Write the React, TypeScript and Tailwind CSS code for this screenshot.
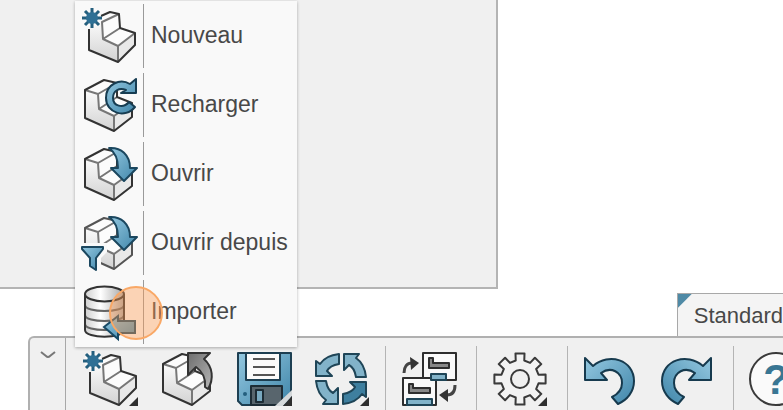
import type { ReactNode } from "react"

type IconProps = { children: ReactNode }

function Icon({ children }: IconProps) {
  return (
    <svg
      viewBox="0 0 54 54"
      className="block size-[54px] shrink-0 overflow-visible"
      fill="none"
      strokeLinejoin="round"
      aria-hidden="true"
    >
      {children}
    </svg>
  )
}

// Shared gradients, referenced by id from every icon
function Gradients() {
  return (
    <svg width="0" height="0" className="absolute" aria-hidden="true">
      <defs>
        <linearGradient id="blue" x1="0" y1="0" x2="1" y2="1">
          <stop offset="0" stopColor="#94c8e0" />
          <stop offset="1" stopColor="#3f85a9" />
        </linearGradient>
        <linearGradient id="front" x1="0" y1="0" x2="0" y2="1">
          <stop offset="0" stopColor="#fbfbfb" />
          <stop offset="1" stopColor="#d2d2d2" />
        </linearGradient>
        <linearGradient id="metal" x1="0" y1="0" x2="1" y2="0">
          <stop offset="0" stopColor="#cfcfcf" />
          <stop offset="0.4" stopColor="#ffffff" />
          <stop offset="1" stopColor="#a5a5a5" />
        </linearGradient>
        <linearGradient id="gray" x1="0" y1="0" x2="1" y2="1">
          <stop offset="0" stopColor="#6e6e6e" />
          <stop offset="1" stopColor="#b5b5b5" />
        </linearGradient>
      </defs>
    </svg>
  )
}

function Part({ outline = "#333333" }: { outline?: string }) {
  return (
    <>
      <path d="M2 12 21 2 34 5V19L49 25V39L31 53 2 40Z" fill="#fcfcfc" />
      <path d="M2 12 15 16 16 31 31 38V53L2 40Z" fill="url(#front)" />
      <path d="M31 38 49 25V39L31 53Z" fill="#e9e9e9" />
      <path d="M2 12 15 16 34 5M15 16 16 31 31 38V53M16 31 34 19M31 38 49 25" stroke="#777777" strokeWidth="2" />
      <path d="M2 12 21 2 34 5V19L49 25V39L31 53 2 40Z" stroke={outline} strokeWidth="2" />
    </>
  )
}

function Corner() {
  return <path d="M54 45V54H45Z" fill="#2e2e2e" />
}

function NewIcon({ corner = false }: { corner?: boolean }) {
  return (
    <Icon>
      <path d="M6 14 19 7 27 3 36 5 37 19 52 24V36L35 53 6 41Z" fill="#fcfcfc" />
      <path d="M6 14 19 12 20 30 35 37V53L6 41Z" fill="url(#front)" />
      <path d="M35 37 52 24V36L35 53Z" fill="#e9e9e9" />
      <path d="M36 5 19 13 20 30 35 37V53M20 30 37 19M35 37 52 24" stroke="#777777" strokeWidth="2" />
      <path d="M6 20V41L35 53 52 36V24L37 19 36 5 27 3 18 7" stroke="#333333" strokeWidth="2" />
      <circle cx="9" cy="9" r="9" fill="#fafafa" />
      <path d="M9-1V19M-1 9H19M2 2 16 16M16 2 2 16" stroke="#245f7e" strokeWidth="3" />
      <circle cx="9" cy="9" r="6" fill="#2f7095" />
      {corner && <Corner />}
    </Icon>
  )
}

function ReloadIcon() {
  return (
    <Icon>
      <Part />
      <path
        d="M53 1V15H38L43 12C36 9 30 13 30 20C30 28 40 31 46 24L52 29C42 41 23 35 23 20C23 6 37 0 47 6Z"
        fill="url(#blue)"
        stroke="#173d52"
        strokeWidth="2"
      />
    </Icon>
  )
}

function OpenIcon() {
  return (
    <Icon>
      <Part />
      <path
        d="M26 1C38 0 47 8 47 21H54L41 34 28 21H35C35 12 33 6 26 1Z"
        fill="url(#blue)"
        stroke="#1b475f"
        strokeWidth="2"
      />
    </Icon>
  )
}

function OpenFromIcon() {
  return (
    <Icon>
      <Part outline="#555555" />
      <path d="M-2 27H24V36L18 42V56H-2Z" fill="#f9f9f9" />
      <path
        d="M26 1C38 0 47 8 47 21H54L41 34 28 21H35C35 12 33 6 26 1Z"
        fill="url(#blue)"
        stroke="#1b475f"
        strokeWidth="2"
      />
      <path d="M-1 31H20V33L13 42V54L7 50V42L-1 33Z" fill="url(#blue)" stroke="#1b475f" strokeWidth="2" />
    </Icon>
  )
}

function ImportIcon() {
  return (
    <Icon>
      <path d="M2 9V45C2 54 41 54 41 45V9Z" fill="url(#metal)" />
      <path d="M2 20C2 28 41 28 41 20M2 30C2 38 41 38 41 30M2 39C2 47 41 47 41 39" stroke="#666666" strokeWidth="2" />
      <path d="M2 9V45C2 54 41 54 41 45V9" stroke="#333333" strokeWidth="2" />
      <ellipse cx="21.5" cy="9" rx="19.5" ry="7.5" fill="url(#metal)" stroke="#333333" strokeWidth="2" />
      <path d="M21 42 35 31V36H52V48H35V54Z" fill="url(#blue)" stroke="#174a66" strokeWidth="2" strokeLinejoin="miter" />
    </Icon>
  )
}

function ReopenIcon() {
  return (
    <Icon>
      <Part />
      <path
        d="M27 1H49L43 7C52 15 53 27 47 37L44 35C45 26 42 20 35 15L27 23Z"
        fill="url(#gray)"
        stroke="#333333"
        strokeWidth="2"
      />
    </Icon>
  )
}

function SaveIcon() {
  return (
    <Icon>
      <path d="M0 1H53V53H4L0 49Z" fill="url(#blue)" stroke="#1d3f52" strokeWidth="2" />
      <path d="M8 1H42V28H8Z" fill="#fbfbfb" stroke="#1d3f52" strokeWidth="2" />
      <path d="M15 7H37M15 15H37M15 23H37" stroke="#555555" strokeWidth="2" />
      <path d="M13 34H44V53H13Z" fill="#58656d" stroke="#1d2c35" strokeWidth="2" />
      <path d="M18 38H25V50H18Z" fill="#79a9c0" stroke="#1d2c35" strokeWidth="2" />
      <circle cx="7" cy="42" r="2" fill="#245f7e" />
      <path d="M54 38V44L45 54H37Z" fill="#d5d9db" />
      <path d="M54 44V54H45Z" fill="#2e2e2e" />
    </Icon>
  )
}

function RebuildIcon() {
  const arrow = "M24 2V12C18 13 14 15 12 19L17 24H1V9L5 12C9 6 15 3 24 2Z"
  return (
    <Icon>
      {[0, 90, 180, 270].map((angle) => (
        <path
          key={angle}
          d={arrow}
          transform={`rotate(${angle} 26 27)`}
          fill={angle === 180 ? "#3e7f9f" : "#82b3c9"}
          stroke="#1f4557"
          strokeWidth="2"
        />
      ))}
      <Corner />
    </Icon>
  )
}

function CompareIcon() {
  return (
    <Icon>
      <path d="M21 1H54V28H21Z" fill="#fafafa" stroke="#2e2e2e" strokeWidth="2" />
      <path d="M27 6H31V11H47V16H27Z" fill="#888888" stroke="#2e2e2e" strokeWidth="2" />
      <path d="M1 26H34V53H1Z" fill="#fafafa" stroke="#2e2e2e" strokeWidth="2" />
      <path d="M29 22H44V28H29Z" fill="#82b3c9" stroke="#1f4557" strokeWidth="2" />
      <path d="M5 47H30V53H5Z" fill="#82b3c9" stroke="#1f4557" strokeWidth="2" />
      <path d="M7 32H11V36H28V41H7Z" fill="#888888" stroke="#2e2e2e" strokeWidth="2" />
      <path d="M2 21C2 15 5 11 10 11" stroke="#444444" strokeWidth="3" />
      <path d="M8 5 17 11 9 18Z" fill="#333333" />
      <path d="M53 33C53 40 50 43 45 43" stroke="#444444" strokeWidth="3" />
      <path d="M46 37 37 43 46 50Z" fill="#333333" />
    </Icon>
  )
}

function GearIcon() {
  const points: string[] = []
  for (let tooth = 0; tooth < 8; tooth++) {
    for (const [offset, radius] of [[-13, 19], [-10, 26], [10, 26], [13, 19]]) {
      const angle = ((tooth * 45 + offset) * Math.PI) / 180
      points.push(`${27 + radius * Math.cos(angle)},${27 + radius * Math.sin(angle)}`)
    }
  }
  return (
    <Icon>
      <polygon points={points.join(" ")} fill="#f3f3f3" stroke="#3a3a3a" strokeWidth="2" />
      <circle cx="27" cy="27" r="9" fill="#f0f0f0" stroke="#3a3a3a" strokeWidth="2" />
      <Corner />
    </Icon>
  )
}

function UndoIcon({ flip = false }: { flip?: boolean }) {
  return (
    <Icon>
      <path
        transform={flip ? "translate(51 0) scale(-1 1)" : undefined}
        d="M1 6V28H23L17 21C27 14 38 20 38 31C38 37 34 42 28 45L34 52C43 48 50 40 50 29C50 8 25 0 9 14Z"
        fill="url(#blue)"
        stroke="#163a4e"
        strokeWidth="2"
      />
    </Icon>
  )
}

const menuItems = [
  { label: "Nouveau", icon: <NewIcon /> },
  { label: "Recharger", icon: <ReloadIcon /> },
  { label: "Ouvrir", icon: <OpenIcon /> },
  { label: "Ouvrir depuis", icon: <OpenFromIcon /> },
  { label: "Importer", icon: <ImportIcon /> },
]

function FileMenu() {
  return (
    <div
      role="menu"
      className="absolute bottom-full -left-[9px] z-10 mb-[5px] bg-[#f9f9f9] pb-px shadow-[0_1px_3px_rgba(0,0,0,0.3)]"
    >
      {menuItems.map((item) => (
        <button
          key={item.label}
          type="button"
          role="menuitem"
          className="flex h-[69px] w-full items-center pr-[9px] pl-2 text-left"
        >
          {item.icon}
          <span className="ml-[6px] flex h-16 items-center border-l border-[#9a9a9a] pl-[7px] whitespace-nowrap">
            {item.label}
          </span>
        </button>
      ))}
      {/* Click marker */}
      <span className="pointer-events-none absolute bottom-[7px] left-[34px] size-[54px] rounded-full border-2 border-[#f9a866] bg-[#ff9a50]/40" />
    </div>
  )
}

function ToolButton({ label, children }: { label: string; children: ReactNode }) {
  return (
    <button type="button" aria-label={label} className="shrink-0">
      {children}
    </button>
  )
}

function Separator() {
  return <div className="mt-2 w-px shrink-0 self-stretch bg-[#b4b4b4]" />
}

export default function App() {
  return (
    <div className="flex h-screen flex-col overflow-hidden bg-white font-['Liberation_Sans',Arial,sans-serif] text-[23px] text-[#484848]">
      <Gradients />
      <main className="w-[63.6%] flex-1 border-r-2 border-b-2 border-[#b4b4b4] bg-[#f0f0f0]" />

      <div className="mt-1 flex">
        <button
          type="button"
          className="relative ml-auto h-[43px] overflow-hidden border-t border-l border-[#a8a8a8] bg-[#f4f4f4] pl-4 text-[22px] whitespace-nowrap"
        >
          <span className="absolute top-0 left-0 size-[14px] bg-[#4f8aa6] [clip-path:polygon(0_0,100%_0,0_100%)]" />
          Standard
        </button>
      </div>

      <div
        role="toolbar"
        className="ml-7 flex h-[74px] shrink-0 items-start rounded-tl-md border-t-2 border-l-2 border-[#b0b0b0] bg-[#f0f0f0]"
      >
        <button
          type="button"
          aria-label="Options"
          className="flex w-9 shrink-0 justify-center self-stretch border-r border-[#a8a8a8] pt-[13px]"
        >
          <svg viewBox="0 0 16 8" className="h-2 w-4" fill="none" stroke="#777777" strokeWidth="2" aria-hidden="true">
            <path d="M1 1 6 5Q8 7 10 5L15 1" />
          </svg>
        </button>

        <div className="flex shrink-0 gap-[23px] pt-[14px] pr-4 pl-[18px]">
          <div className="relative flex">
            <ToolButton label="Nouveau">
              <NewIcon corner />
            </ToolButton>
            <FileMenu />
          </div>
          <ToolButton label="Ouvrir">
            <ReopenIcon />
          </ToolButton>
          <ToolButton label="Enregistrer">
            <SaveIcon />
          </ToolButton>
          <ToolButton label="Reconstruire">
            <RebuildIcon />
          </ToolButton>
        </div>
        <Separator />
        <div className="flex shrink-0 pt-[14px] pr-5 pl-4">
          <ToolButton label="Remplacer">
            <CompareIcon />
          </ToolButton>
        </div>
        <Separator />
        <div className="flex shrink-0 pt-[14px] pr-5 pl-4">
          <ToolButton label="Paramètres">
            <GearIcon />
          </ToolButton>
        </div>
        <Separator />
        <div className="flex shrink-0 gap-[23px] pt-[14px] pr-[18px] pl-4">
          <ToolButton label="Annuler">
            <UndoIcon />
          </ToolButton>
          <ToolButton label="Rétablir">
            <UndoIcon flip />
          </ToolButton>
        </div>
        <Separator />
        <div className="flex shrink-0 pt-[14px] pl-[15px]">
          <button
            type="button"
            aria-label="Aide"
            className="flex size-[54px] shrink-0 items-center justify-center rounded-full border-2 border-[#3a3a3a] bg-[#fafafa] text-[42px] font-bold text-[#397693]"
          >
            ?
          </button>
        </div>
      </div>
    </div>
  )
}
